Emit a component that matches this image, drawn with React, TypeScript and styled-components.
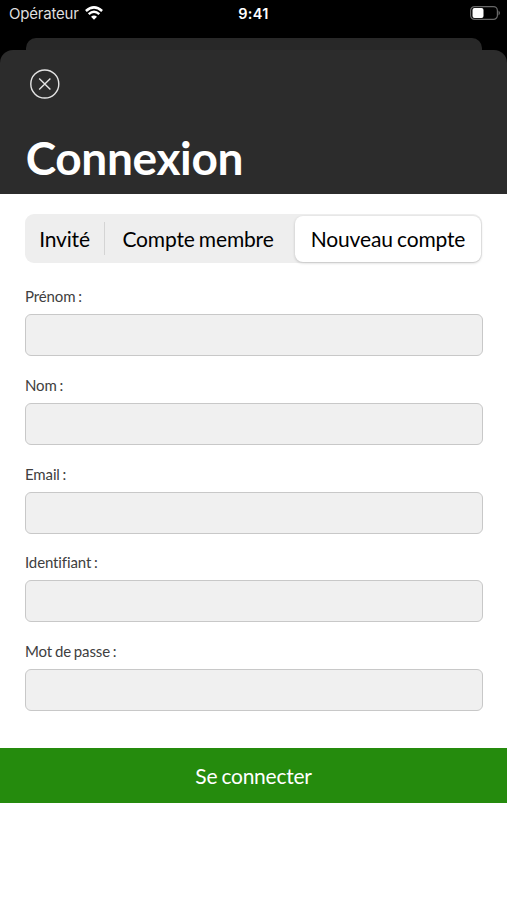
import React from "react";
import styled, { createGlobalStyle } from "styled-components";

const Global = createGlobalStyle`
  *{box-sizing:border-box}
  body{margin:0;background:#fff;font-family:Lato,sans-serif;overflow:hidden}
`;
const Screen = styled.main`width:507px;height:900px;background:#fff;`;
const Top = styled.div`background:#000;`;
const StatusBar = styled.div`
  height:38px;padding:0 6px 12px 9px;display:grid;grid-template-columns:1fr auto 1fr;align-items:center;
  color:#fff;font:15px Inter,sans-serif;
`;
const Carrier = styled.div`display:flex;align-items:center;gap:6px;color:#dedede;letter-spacing:-.2px;`;
const Time = styled.div`font-weight:600;font-size:14.5px;margin-right:3px;letter-spacing:.3px;`;
const Battery = styled.div`display:flex;justify-content:flex-end;`;
const BackSheet = styled.div`height:12px;margin:0 25px 0 26px;border-radius:10px 10px 0 0;background:#282828;`;
const Header = styled.header`
  height:144px;padding:19px 25px 0;background:#2c2c2c;border-radius:13px 13px 0 0;color:#fff;
`;
const Close = styled.button`display:block;width:30px;height:30px;margin:0 0 0 5px;padding:0;border:0;background:none;`;
const Title = styled.h1`margin:31px 0 0 .7px;font-size:46px;line-height:56px;font-weight:700;letter-spacing:-.35px;`;
const Tabs = styled.div`
  display:flex;align-items:center;margin:20px 25px 0;height:49px;width:457px;background:#eee;border-radius:9px;
`;
const Tab = styled.button<{ $w: number; $active?: boolean }>`
  width:${p => p.$w}px;height:${p => (p.$active ? 46 : 34)}px;padding:0;border:0;
  margin-left:${p => (p.$active ? "auto" : 0)};margin-right:${p => (p.$active ? 1 : 0)}px;
  border-radius:${p => (p.$active ? 8 : 0)}px;background:${p => (p.$active ? "#fff" : "none")};
  box-shadow:${p => (p.$active ? "0 1px 3px rgba(0,0,0,.2)" : "none")};
  font:21px Lato,sans-serif;color:#000;white-space:nowrap;letter-spacing:-.16px;word-spacing:-1px;
`;
const Divider = styled.span`width:1px;height:33px;background:#d4d4d4;`;
const Form = styled.form`padding:25px 25px 0;`;
const Field = styled.label`
  display:block;height:88.75px;font-size:15px;line-height:17px;color:#404040;
  letter-spacing:-.12px;word-spacing:-.9px;
`;
const Input = styled.input`
  display:block;width:457.5px;height:42px;margin-top:9px;border:1px solid #c8c8c8;border-radius:6px;background:#f0f0f0;
`;
const Submit = styled.button`
  display:block;width:507px;height:55px;margin-top:16px;padding:0;border:0;
  background:#258b0d;color:#fff;font:21px Lato,sans-serif;letter-spacing:-.25px;word-spacing:-1px;
`;
const fields = ["Prénom :", "Nom :", "Email :", "Identifiant :", "Mot de passe :"];

export default function App() {
  return (
    <Screen>
      <Global />
      <Top>
        <StatusBar>
          <Carrier>
            Opérateur
            <svg width="18" height="14" viewBox="0 0 18 14" fill="none" stroke="#fff" strokeWidth="2.5">
              <path d="M.9 5Q9-2.2 17.1 5M3.7 8.1Q9 3.5 14.3 8.1" />
              <path d="M6 10.7Q9 8.2 12 10.7L9 13.8Z" fill="#fff" stroke="none" />
            </svg>
          </Carrier>
          <Time>9:41</Time>
          <Battery>
            <svg width="31" height="14" viewBox="0 0 31 14">
              <rect x=".6" y=".6" width="26.8" height="12.8" rx="4" fill="none" stroke="#686868" strokeWidth="1.2" />
              <rect x="2.5" y="2" width="11" height="10" rx="2" fill="#fff" />
              <path d="M28.5 4.5Q31.5 7 28.5 9.5Z" fill="#686868" />
            </svg>
          </Battery>
        </StatusBar>
        <BackSheet />
        <Header>
          <Close aria-label="Fermer">
            <svg width="30" height="30" viewBox="0 0 30 30" fill="none" stroke="#e4e4e4" strokeWidth="1.4">
              <circle cx="14.8" cy="15" r="14" />
              <path d="M9.2 9.4L20.4 20.6M20.4 9.4L9.2 20.6" />
            </svg>
          </Close>
          <Title>Connexion</Title>
        </Header>
      </Top>
      <Tabs>
        <Tab $w={79}>Invité</Tab>
        <Divider />
        <Tab $w={186}>Compte membre</Tab>
        <Tab $w={186} $active>Nouveau compte</Tab>
      </Tabs>
      <Form>
        {fields.map(f => (
          <Field key={f}>{f}<Input /></Field>
        ))}
      </Form>
      <Submit>Se connecter</Submit>
    </Screen>
  );
}
